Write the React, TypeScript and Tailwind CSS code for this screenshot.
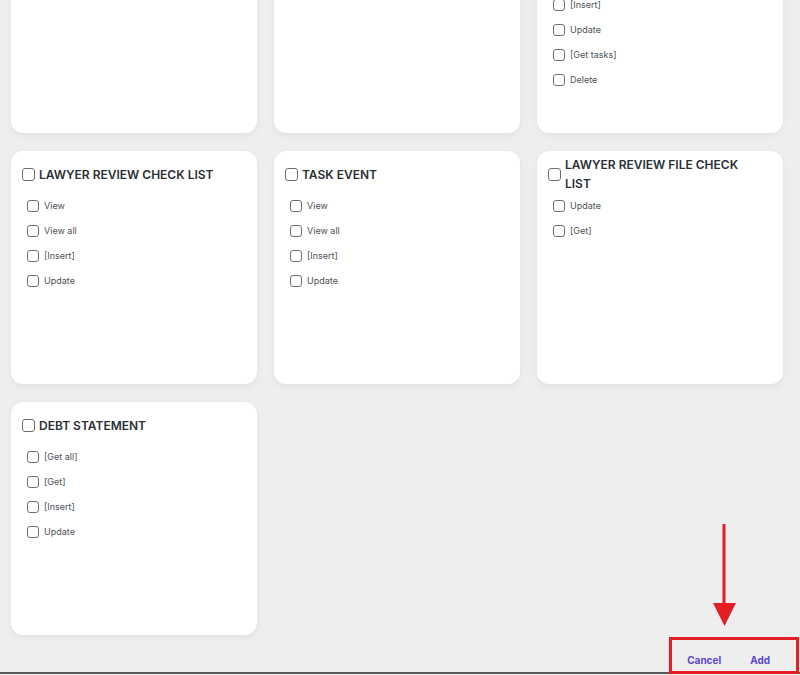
import React from 'react';

type Group = { title: string; perms: string[] };

// the page is scrolled: the first row is mostly above the viewport
const groups: Group[] = [
  { title: '', perms: [] },
  { title: '', perms: [] },
  { title: 'Task', perms: ['View', 'View all', '[Insert]', 'Update', '[Get tasks]', 'Delete'] },
  { title: 'Lawyer review check list', perms: ['View', 'View all', '[Insert]', 'Update'] },
  { title: 'Task event', perms: ['View', 'View all', '[Insert]', 'Update'] },
  { title: 'Lawyer review file check list', perms: ['Update', '[Get]'] },
  { title: 'Debt statement', perms: ['[Get all]', '[Get]', '[Insert]', 'Update'] },
];

function Box({ size }: { size: 'lg' | 'sm' }) {
  return (
    <span
      className={
        size === 'lg'
          ? 'h-[13px] w-[13px] shrink-0 rounded-[3px] border-[1.5px] border-[#6b6f75] bg-white'
          : 'h-[12px] w-[12px] shrink-0 rounded-[3px] border-[1.5px] border-[#6b6f75] bg-white'
      }
    />
  );
}

function PermissionCard({ group }: { group: Group }) {
  return (
    <div className="h-[233px] rounded-[12px] bg-white pt-[4px] shadow-[0_2px_6px_rgba(0,0,0,0.06)]">
      {group.title && (
        <div className="flex min-h-[38px] items-center gap-[4px] pl-[11px] pr-[24px]">
          <Box size="lg" />
          <span className="text-[12px] font-semibold uppercase leading-[19px] text-[#2b2f36]">
            {group.title}
          </span>
        </div>
      )}
      <ul>
        {group.perms.map((p, i) => (
          <li key={i} className="flex h-[25px] items-center gap-[5px] pl-[16px]">
            <Box size="sm" />
            <span className="text-[9px] text-[#4d5157]">{p}</span>
          </li>
        ))}
      </ul>
    </div>
  );
}

export default function App() {
  return (
    <div
      className="relative flex h-[675px] w-[800px] flex-col overflow-hidden bg-[#eeeeee]"
      style={{ fontFamily: 'Inter, "Noto Sans", sans-serif' }}
    >
      <div className="-mt-[100px] grid grid-cols-[246px_246px_246px] gap-x-[17px] gap-y-[18px] pl-[11px]">
        {groups.map((g, i) => (
          <PermissionCard key={i} group={g} />
        ))}
      </div>

      <div className="mt-[1px] flex h-[38px] items-center justify-end border-b-2 border-[#5a5a5a] pr-[14px]">
        <button className="pl-[16px] pr-[13px] pt-[12px] text-[10px] font-bold text-[#5b45d6]">Cancel</button>
        <button className="px-[16px] pt-[12px] text-[10px] font-bold text-[#5b45d6]">Add</button>
      </div>

      {/* annotation */}
      <svg className="absolute left-[710px] top-[524px]" width="30" height="104" viewBox="0 0 30 104">
        <rect x="12.5" y="0" width="3" height="84" fill="#e31e24" />
        <polygon points="3,79 26,79 14.5,102" fill="#e31e24" />
      </svg>
      <div className="absolute left-[669px] top-[637px] h-[37px] w-[130px] border-[3px] border-[#e31e24]" />
    </div>
  );
}
